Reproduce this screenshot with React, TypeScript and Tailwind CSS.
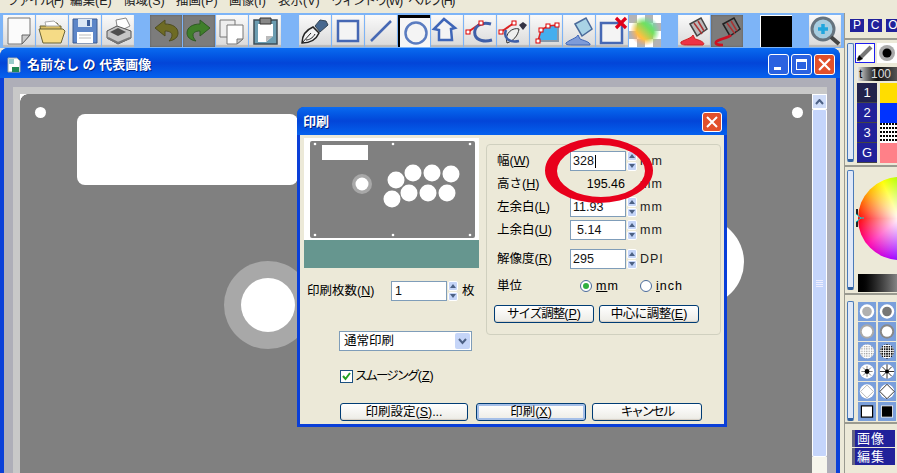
import React from "react";

const font = "font-['Liberation_Sans','Noto_Sans_CJK_JP',sans-serif]";

const Icons: Record<string, React.ReactNode> = {
  newDoc: (<><path d="M5 3h22v17l-8 9H5z" fill="#fbfbfb" stroke="#777" strokeWidth="1" /><path d="M27 20l-8 9v-9z" fill="#ccc" stroke="#666" /></>),
  folder: (<><path d="M4 11h6l2-3h9l2 3h2v16H7z" fill="#d9bd62" stroke="#6b6436" /><path d="M9 7l9-1 5 5H10z" fill="#fff" stroke="#aaa" /><path d="M3 14h24l2 2-4 12H7z" fill="#f5db86" stroke="#6b6436" /></>),
  save: (<><path d="M4 4h24v24H4z" fill="#5d86c8" stroke="#3d5c92" /><path d="M9 4h14v8H9z" fill="#dbe7f5" /><path d="M18 5h3v6h-3z" fill="#3c5f9c" /><path d="M8 17h16v11H8z" fill="#fff" /><path d="M10 20h12M10 23h12" stroke="#bbb" /></>),
  print: (<><path d="M14 5l10-2 4 8-12 6z" fill="#fff" stroke="#888" /><path d="M5 16l10-5 14 5v7l-13 6-11-6z" fill="#c5c5c5" stroke="#555" /><path d="M8 17l8-4 8 4-8 4z" fill="#4e4e4e" /><path d="M6 23l10 5 12-5" fill="none" stroke="#777" strokeWidth="2" /></>),
  undo: <path d="M15 5L5 13l10 8v-5c5 0 7 2 7 4 0 2-1 4-3 6 6-1 9-4 9-8 0-6-6-9-13-9z" fill="#6e6b24" stroke="#4f4d20" />,
  redo: <path d="M17 5l10 8-10 8v-5c-5 0-7 2-7 4 0 2 1 4 3 6-6-1-9-4-9-8 0-6 6-9 13-9z" fill="#3f7f2a" stroke="#2f5a24" />,
  copy: (<><path d="M4 5h15v17H4z" fill="#eee" stroke="#777" /><path d="M11 10h16v14l-6 5H11z" fill="#fff" stroke="#777" /><path d="M27 24l-6 5v-5z" fill="#ccc" stroke="#777" /></>),
  paste: (<><path d="M5 5h23v24H5z" fill="#6c9db1" stroke="#3c4c56" strokeWidth="1.5" /><path d="M9 9h15v12l-7 6H9z" fill="#fff" /><path d="M17 27l7-6h-7z" fill="#bbb" /><path d="M11 3h11v6H11z" fill="#888" stroke="#333" /></>),
  pen: (<><path d="M3 28c0-7 4-13 11-16l6 6c-3 7-10 10-17 10z" fill="#f2f2f2" stroke="#222" strokeWidth="1.5" /><path d="M3 28l9-10M7 25c3 0 7-2 9-6" stroke="#222" fill="none" /><path d="M16 11l5-6 6 1 2 4-8 7z" fill="#47688f" stroke="#345" /></>),
  rect: <rect x="6" y="6" width="20" height="20" fill="#f4f4f4" stroke="#4668b4" strokeWidth="2.5" />,
  line: <path d="M6 26L26 6" stroke="#4668b4" strokeWidth="2.5" />,
  ellipse: <circle cx="18" cy="18" r="10.5" fill="#f4f4f4" stroke="#5a7cc0" strokeWidth="2.5" />,
  poly: <path d="M13 4L3 14l5 1v10h13l-1-11 4-1z" fill="#f4f4f4" stroke="#3f66b8" strokeWidth="2.5" />,
  nodeCurve: (<><path d="M4 17L17 8" stroke="#d22" strokeWidth="2" /><path d="M27 9c-10-3-18 3-16 11 2 6 10 7 17 5" fill="none" stroke="#3f5fa8" strokeWidth="3" /><rect x="2" y="15" width="4" height="4" fill="#fff" stroke="#d00" /><rect x="15" y="6" width="4" height="4" fill="#fff" stroke="#d00" /></>),
  nodePen: (<><path d="M4 17L17 8" stroke="#d22" strokeWidth="2" /><path d="M10 28c-3-10 6-16 12-14-1 7-6 12-12 14z" fill="#eee" stroke="#333" /><path d="M9 15c-3 8 3 13 13 11" fill="none" stroke="#3f5fa8" strokeWidth="2.5" /><path d="M22 10l4-3 4 3-4 5z" fill="#334" /><rect x="2" y="15" width="4" height="4" fill="#fff" stroke="#d00" /><rect x="15" y="6" width="4" height="4" fill="#fff" stroke="#d00" /></>),
  polyFill: (<><path d="M8 26l3-11 7-4 9-1v16z" fill="#44aeee" /><path d="M8 26l3-11 7-4 9-1" fill="none" stroke="#d22" strokeWidth="1.5" /><path d="M8 26h20v-16" fill="none" stroke="#8899aa" strokeWidth="2" /><rect x="6" y="24" width="4" height="4" fill="#fff" stroke="#d00" /><rect x="9" y="13" width="4" height="4" fill="#fff" stroke="#d00" /><rect x="16" y="9" width="4" height="4" fill="#fff" stroke="#d00" /><rect x="25" y="8" width="4" height="4" fill="#fff" stroke="#d00" /></>),
  bucket: (<><path d="M12 9l11-6 6 11-10 7z" fill="#a9d3e5" stroke="#4a6a9a" strokeWidth="1.5" /><path d="M15 20c-1 3-9 5-12 8-1 2 3 2 7 2h17c1-3-8-5-10-6z" fill="#7e9bd8" stroke="#3f66b8" /></>),
  rectX: (<><rect x="5" y="8" width="21" height="20" fill="#f4f4f4" stroke="#4668b4" strokeWidth="2.5" /><path d="M20 3l10 10M30 3L20 13" stroke="#e0001a" strokeWidth="3.2" /></>),
  redBucket: (<><path d="M12 9l11-6 6 11-10 7z" fill="#bbb" stroke="#444" strokeWidth="1.5" /><path d="M16 8l8 11M20 6l6 10" stroke="#a33" strokeWidth="1.5" /><path d="M15 20c-1 3-9 5-12 7-1 3 3 3 7 3h15c3-2-3-5-8-6z" fill="#ee3344" stroke="#c22" /></>),
  redLine: (<><path d="M12 9l11-6 6 11-10 7z" fill="#777" stroke="#222" strokeWidth="1.5" /><path d="M16 8l8 11M20 6l6 10" stroke="#a33" strokeWidth="1.5" /><path d="M20 20c-2 3-13 4-15 7-1 2 1 3 7 3" fill="none" stroke="#cc1122" strokeWidth="2.5" /></>),
  zoom: (<><circle cx="14" cy="14" r="11" fill="#a7cde0" stroke="#66747f" strokeWidth="3" /><path d="M9 14h10M14 9v10" stroke="#22a6dd" strokeWidth="3.5" /><path d="M22 22l8 7" stroke="#444" strokeWidth="4" /></>),
};

function ToolButton({ icon, dim, active, ml }: { icon: string; dim?: boolean; active?: boolean; ml?: string }) {
  const look = dim
    ? "bg-[#7c7c7c] shadow-[inset_0_0_2px_#555]"
    : active
      ? "bg-[#f6f6f6] shadow-[inset_2px_3px_0_#000]"
      : "bg-gradient-to-b from-[#fafafa] to-[#d9d9d9] shadow-[inset_0_-2px_1px_#b8b8b8]";
  return (
    <div className={`w-[32px] h-[32px] shrink-0 ${ml ?? ""} ${look}`}>
      <svg viewBox="0 0 32 32" className="w-full h-full block">{Icons[icon]}</svg>
    </div>
  );
}

function CheckerIcon() {
  return (
    <div className="w-[32px] h-[32px] shrink-0 relative overflow-hidden">
      <svg viewBox="0 0 32 32" className="w-full h-full block">
        <defs>
          <pattern id="chk" width="16" height="16" patternUnits="userSpaceOnUse">
            <rect width="16" height="16" fill="#fff" />
            <rect width="8" height="8" fill="#b4b4b4" />
            <rect x="8" y="8" width="8" height="8" fill="#b4b4b4" />
          </pattern>
          <linearGradient id="rb" x1="0" y1="1" x2="1" y2="0">
            <stop offset="0%" stopColor="#ff70a0" />
            <stop offset="35%" stopColor="#ffc040" />
            <stop offset="60%" stopColor="#70e060" />
            <stop offset="100%" stopColor="#60c8ff" />
          </linearGradient>
          <radialGradient id="rm" cx="50%" cy="50%" r="50%">
            <stop offset="55%" stopColor="#fff" />
            <stop offset="100%" stopColor="#000" />
          </radialGradient>
          <mask id="mk"><circle cx="16" cy="16" r="15" fill="url(#rm)" /></mask>
        </defs>
        <rect width="32" height="32" fill="url(#chk)" />
        <rect width="32" height="32" fill="url(#rb)" mask="url(#mk)" />
      </svg>
    </div>
  );
}

const menus = [
  ["ファイル(F)", "w-[63px] tracking-[-1.5px]"],
  ["編集(E)", "w-[53px]"],
  ["領域(S)", "w-[53px]"],
  ["描画(P)", "w-[53px]"],
  ["画像(I)", "w-[49px]"],
  ["表示(V)", "w-[53px]"],
  ["ウィンドウ(W)", "w-[77px] tracking-[-1.5px]"],
  ["ヘルプ(H)", "w-[70px] tracking-[-1.5px]"],
];

function L({ t, k, tail, tk }: { t: string; k: string; tail?: string; tk?: string }) {
  return (
    <span className="whitespace-nowrap">
      <span className={tk}>{t}</span>(<span className="underline">{k}</span>){tail}
    </span>
  );
}

function Spin({ h = "h-[20px]" }: { h?: string }) {
  return (
    <div className={`w-[10px] ${h} ml-[1px] flex flex-col gap-[1px] shrink-0`}>
      {[0, 1].map((i) => (
        <div key={i} className="flex-1 bg-[#c5d5f8] border border-white rounded-[2px] flex items-center justify-center">
          <svg width="6" height="4" viewBox="0 0 6 4">
            <path d={i === 0 ? "M0 4L3 0l3 4z" : "M0 0l3 4 3-4z"} fill="#4d6185" />
          </svg>
        </div>
      ))}
    </div>
  );
}

function Input({ v, cursor, indent }: { v: string; cursor?: boolean; indent?: string }) {
  return (
    <div className={`w-[56px] h-[20px] border border-[#7f9db9] bg-white flex items-center text-[12.5px] text-[#111] ${indent ?? "pl-[2px]"}`}>
      {v}
      {cursor && <span className="w-[1px] h-[13px] bg-black ml-[1px]" />}
    </div>
  );
}

function Btn({ w, children, focus }: { w: string; children: React.ReactNode; focus?: boolean }) {
  return (
    <div className={`${w} h-[18px] shrink-0 border border-[#003c74] rounded-[3px] bg-gradient-to-b from-white to-[#ecebe5] flex items-center justify-center text-[12.5px] text-black ${focus ? "shadow-[inset_0_0_0_2px_#a5bfe8]" : "shadow-[inset_0_-1px_1px_#d6d0c5]"}`}>
      {children}
    </div>
  );
}

function Row({ label, children, mt }: { label: React.ReactNode; children: React.ReactNode; mt: string }) {
  return (
    <div className={`flex items-center h-[20px] ${mt}`}>
      <div className="w-[73px] shrink-0 text-[12.5px] text-black">{label}</div>
      {children}
    </div>
  );
}

function Unit({ t }: { t: string }) {
  return <span className="ml-[3px] text-[12.5px] tracking-[1px] text-[#222]">{t}</span>;
}

function CloseX({ size }: { size: number }) {
  return (
    <svg width={size} height={size} viewBox="0 0 12 12">
      <path d="M1 1l10 10M11 1L1 11" stroke="#fff" strokeWidth="2" />
    </svg>
  );
}

function Preview() {
  const circles = [[92, 42], [109, 35], [128, 35], [147, 36], [88, 61], [105, 55], [124, 55], [143, 55]];
  const dots = [[11, 6], [89, 6], [166, 6], [11, 97], [89, 97], [166, 97]];
  return (
    <svg width="175" height="130" viewBox="0 0 175 130" className="block">
      <rect width="175" height="102" fill="#fff" />
      <rect x="6" y="3" width="165" height="97" rx="2" fill="#808080" />
      <rect x="18" y="7" width="46" height="15" fill="#fff" />
      <circle cx="58" cy="46" r="10" fill="#a8a8a8" />
      <circle cx="58" cy="46" r="6.5" fill="#fff" />
      {circles.map(([x, y], i) => <circle key={i} cx={x} cy={y} r="8.5" fill="#fff" />)}
      {dots.map(([x, y], i) => <circle key={i} cx={x} cy={y} r="1.3" fill="#fff" />)}
      <rect y="102" width="175" height="28" fill="#66968f" />
    </svg>
  );
}

function Dialog() {
  return (
    <div className={`absolute left-[277px] top-[13px] w-[430px] h-[320px] rounded-t-[7px] bg-[#0a3fd8] flex flex-col ${font}`}>
      <div className="h-[28px] shrink-0 flex items-center justify-between pl-[6px] pr-[5px] pt-[2px] rounded-t-[7px] bg-gradient-to-b from-[#0b6af0] via-[#0345d8] to-[#0661ee]">
        <span className="text-[13px] font-bold text-white [text-shadow:1px_1px_0_#002080]">印刷</span>
        <div className="w-[20px] h-[20px] rounded-[3px] border border-white bg-[#e2502b] flex items-center justify-center">
          <CloseX size={12} />
        </div>
      </div>
      <div className="flex-1 mx-[3px] mb-[3px] bg-[#ece9d8] flex flex-col pt-[3px]">
        <div className="flex pl-[4px]">
          <div className="w-[175px] shrink-0 flex flex-col">
            <Preview />
            <div className="flex items-center h-[20px] mt-[13px] pl-[3px] text-[12.5px]">
              <div className="w-[84px] shrink-0"><L t="印刷枚数" k="N" /></div>
              <Input v="1" indent="pl-[3px]" />
              <Spin />
              <span className="ml-[4px]">枚</span>
            </div>
            <div className="w-[133px] h-[20px] mt-[30px] ml-[35px] border border-[#7f9db9] bg-white flex items-center justify-between text-[12.5px] pl-[4px]">
              通常印刷
              <div className="w-[15px] h-[16px] mr-[1px] bg-[#c5d5f8] rounded-[2px] flex items-center justify-center">
                <svg width="9" height="7" viewBox="0 0 9 7"><path d="M1 1l3.5 4L8 1" fill="none" stroke="#4d6185" strokeWidth="2" /></svg>
              </div>
            </div>
            <div className="flex items-center mt-[16px] ml-[36px] text-[12.5px]">
              <div className="w-[13px] h-[13px] border border-[#1c5180] bg-white flex items-center justify-center">
                <svg width="9" height="9" viewBox="0 0 9 9"><path d="M1 4l2.5 3L8 1" fill="none" stroke="#21a121" strokeWidth="2" /></svg>
              </div>
              <span className="ml-[2px]"><L t="スムージング" k="Z" tk="tracking-[-2px]" /></span>
            </div>
          </div>
          <div className="ml-[7px] mt-[6px] w-[235px] h-[191px] shrink-0 border border-[#d0d0bf] rounded-[4px] pl-[10px] pt-[6px]">
            <Row label={<L t="幅" k="W" />} mt="">
              <Input v="328" cursor />
              <Spin />
              <Unit t="mm" />
            </Row>
            <Row label={<L t="高さ" k="H" />} mt="mt-[3px]">
              <div className="w-[56px] text-right text-[12.5px] pr-[1px]">195.46</div>
              <span className="ml-[14px] text-[12.5px] tracking-[1px] text-[#222]">mm</span>
            </Row>
            <Row label={<L t="左余白" k="L" />} mt="mt-[3px]">
              <Input v="11.93" />
              <Spin />
              <Unit t="mm" />
            </Row>
            <Row label={<L t="上余白" k="U" />} mt="mt-[3px]">
              <Input v="5.14" indent="pl-[6px]" />
              <Spin />
              <Unit t="mm" />
            </Row>
            <Row label={<L t="解像度" k="R" />} mt="mt-[9px]">
              <Input v="295" />
              <Spin />
              <Unit t="DPI" />
            </Row>
            <Row label="単位" mt="mt-[7px]">
              <div className="ml-[10px] w-[12px] h-[12px] rounded-full border border-[#4a6a9a] bg-white flex items-center justify-center">
                <div className="w-[6px] h-[6px] rounded-full bg-[#30b040]" />
              </div>
              <span className="ml-[4px] w-[44px] text-[12.5px] tracking-[1px]"><span className="underline">m</span>m</span>
              <div className="w-[12px] h-[12px] rounded-full border border-[#4a6a9a] bg-white" />
              <span className="ml-[4px] text-[12.5px] tracking-[1px]"><span className="underline">i</span>nch</span>
            </Row>
            <div className="flex gap-[5px] mt-[9px] -ml-[3px]">
              <Btn w="w-[100px]"><L t="サイズ調整" k="P" tk="tracking-[-1px]" /></Btn>
              <Btn w="w-[100px]"><L t="中心に調整" k="E" tk="tracking-[-0.5px]" /></Btn>
            </div>
          </div>
        </div>
        <div className="mt-auto mb-[3px] ml-[40px] flex">
          <Btn w="w-[128px]"><L t="印刷設定" k="S" tail="..." /></Btn>
          <div className="ml-[8px]"><Btn w="w-[110px]" focus><L t="印刷" k="X" /></Btn></div>
          <div className="ml-[6px]"><Btn w="w-[110px]"><span className="tracking-[-2px]">キャンセル</span></Btn></div>
        </div>
      </div>
      <svg className="absolute left-[248px] top-[31px]" width="108" height="65" viewBox="0 0 108 65">
        <path
          fillRule="evenodd"
          fill="#e8001c"
          d="M0 32.5a54 32.5 0 1 0 108 0a54 32.5 0 1 0-108 0zM12 33a44 26 0 1 1 88 0a44 26 0 1 1-88 0z"
        />
      </svg>
    </div>
  );
}

function Strip({ h }: { h: string }) {
  return <div className={`w-[7px] ${h} shrink-0 ml-[2px] border border-[#4a7ab8] rounded-[2px] bg-[#dfe8f8] border-b-[3px] border-b-[#2f5f9f]`} />;
}

const shapes: React.ReactNode[] = [
  <><circle cx="10" cy="10" r="9" fill="#fff" /><circle cx="10" cy="10" r="6" fill="#b0b0b0" /></>,
  <><circle cx="10" cy="10" r="9" fill="#fff" /><circle cx="10" cy="10" r="6" fill="#777" /></>,
  <><circle cx="10" cy="10" r="9" fill="#aaa" /><circle cx="10" cy="10" r="6.5" fill="#fff" /></>,
  <><circle cx="10" cy="10" r="9" fill="#888" /><circle cx="10" cy="10" r="6.5" fill="#fff" /></>,
  <><circle cx="10" cy="10" r="9" fill="url(#dg)" /></>,
  <><circle cx="10" cy="10" r="9" fill="url(#dk)" /></>,
  <><circle cx="10" cy="10" r="9" fill="#fff" /><path d="M10 3v14M3 10h14M5 5l10 10M15 5L5 15" stroke="#666" /><circle cx="10" cy="10" r="3" fill="#000" /></>,
  <><circle cx="10" cy="10" r="9" fill="#fff" /><path d="M10 1v18M1 10h18M4 4l12 12M16 4L4 16" stroke="#000" /><circle cx="10" cy="10" r="2.5" fill="#000" /></>,
  <><circle cx="10" cy="10" r="9" fill="#fff" /><path d="M10 2l8 8-8 8-8-8z" fill="none" stroke="#aaa" /></>,
  <><circle cx="10" cy="10" r="9" fill="#fff" /><path d="M10 1l9 9-9 9-9-9z" fill="none" stroke="#000" /></>,
  <rect x="3" y="3" width="14" height="14" fill="#fff" stroke="#000" strokeWidth="1.5" />,
  <rect x="3" y="3" width="14" height="14" fill="#000" stroke="#fff" strokeWidth="1" />,
];

function RightPanel() {
  const rows: [string, string][] = [["1", "bg-[#22224c]"], ["2", "bg-[#21219a]"], ["3", "bg-[#21219a]"], ["G", "bg-[#21219a]"]];
  return (
    <div className={`w-[53px] shrink-0 bg-[#ece9d8] border-l border-[#9a9a90] overflow-hidden flex flex-col ${font}`}>
      <div className="h-[27px] shrink-0 pt-[6px] pl-[5px] flex gap-[4px] border-b-[2px] border-[#9a9a90]">
        {["P", "C", "O"].map((c) => (
          <div key={c} className="w-[14px] h-[13px] shrink-0 bg-[#21219a] text-white text-[12px] leading-[13px] text-center">{c}</div>
        ))}
      </div>
      <div className="h-[127px] shrink-0 pt-[3px] flex border-b-[2px] border-[#9a9a90]">
        <Strip h="h-[119px]" />
        <div className="ml-[3px] flex flex-col">
          <div className="flex gap-[2px] -ml-[2px]">
            <div className="w-[20px] h-[20px] border border-[#1d1df0] bg-white flex items-center justify-center shrink-0">
              <svg width="18" height="18" viewBox="0 0 18 18"><path d="M2 16L15 3" stroke="#777" strokeWidth="4" /><path d="M1 17l2-6 4 4z" fill="#000" /></svg>
            </div>
            <div className="w-[20px] h-[20px] bg-white flex items-center justify-center shrink-0">
              <svg width="18" height="18" viewBox="0 0 18 18"><circle cx="9" cy="9" r="8" fill="#aaa" /><circle cx="9" cy="9" r="4.5" fill="#000" /></svg>
            </div>
          </div>
          <div className="w-[40px] h-[14px] mt-[4px] flex items-center text-[12px] bg-gradient-to-r from-[#eee] via-[#111] to-[#555] text-white">
            <span className="w-[12px] text-black pl-[2px]">t</span>
            <span className="ml-[2px] text-[#ddd]">100</span>
          </div>
          <div className="mt-[2px] w-[40px] flex flex-col">
            {rows.map(([n, bg], i) => (
              <div key={n} className="h-[20px] flex">
                <div className={`w-[20px] ${bg} text-white text-[13px] leading-[20px] text-center border-b border-[#444]`}>{n}</div>
                <div className="w-[3px] bg-[#ece9d8]" />
                <div className="flex-1">
                  {i === 0 && <div className="h-full bg-[#ffdd00]" />}
                  {i === 1 && <div className="h-full bg-[#0033ff]" />}
                  {i === 2 && (
                    <svg width="17" height="20" className="block">
                      <defs>
                        <pattern id="pd" width="3" height="4" patternUnits="userSpaceOnUse"><rect width="3" height="4" fill="#fff" /><rect width="2" height="2" fill="#000" /></pattern>
                      </defs>
                      <rect width="17" height="20" fill="url(#pd)" />
                    </svg>
                  )}
                  {i === 3 && <div className="h-full bg-[#ff8088]" />}
                </div>
              </div>
            ))}
          </div>
        </div>
      </div>
      <div className="h-[128px] shrink-0 pt-[3px] flex border-b-[2px] border-[#9a9a90]">
        <Strip h="h-[120px]" />
        <div className="ml-[4px] flex flex-col relative">
          <div className="w-[83px] h-[83px] mt-[7px] rounded-full bg-[conic-gradient(#a8ff00,#00ff66_60deg,#00ffff_90deg,#0066ff_150deg,#aa00ff_190deg,#ff00aa_230deg,#ff0000_270deg,#ffaa00_310deg,#ffff00_335deg,#a8ff00)] overflow-hidden shrink-0">
            <div className="w-full h-full rounded-full bg-[radial-gradient(circle,#ffffff,#ffffff00_72%)]" />
          </div>
          <svg className="absolute left-[-2px] top-[39px]" width="8" height="18" viewBox="0 0 8 18">
            <path d="M1 0v6M1 12v6" stroke="#222" strokeWidth="2" />
            <path d="M0 5l5 4-5 4M5 9h3" fill="none" stroke="#00d8d8" />
          </svg>
          <div className="w-[40px] h-[18px] mt-[14px] bg-gradient-to-r from-[#000] to-[#888]" />
        </div>
      </div>
      <div className="h-[129px] shrink-0 pt-[6px] flex border-b-[2px] border-[#9a9a90]">
        <Strip h="h-[120px]" />
        <svg width="40" height="120" viewBox="0 0 40 120" className="ml-[4px] mt-[1px] block shrink-0">
          <defs>
            <pattern id="dg" width="3" height="3" patternUnits="userSpaceOnUse"><rect width="3" height="3" fill="#fff" /><rect width="1.5" height="1.5" fill="#999" /></pattern>
            <pattern id="dk" width="3" height="3" patternUnits="userSpaceOnUse"><rect width="3" height="3" fill="#fff" /><rect width="2" height="2" fill="#111" /></pattern>
          </defs>
          {shapes.map((s, i) => (
            <g key={i} transform={`translate(${(i % 2) * 20} ${Math.floor(i / 2) * 20})`}>
              <rect x="0" y="0" width="18" height="19" fill="#7a9fdb" />
              <g transform="translate(9 9.5) scale(0.8) translate(-10 -10)">{s}</g>
            </g>
          ))}
        </svg>
      </div>
      <div className="flex-1 pt-[6px] pl-[7px] flex flex-col gap-[1px]">
        {["画像", "編集"].map((t) => (
          <div key={t} className="w-[43px] h-[17px] bg-[#21219a] border-l-[3px] border-[#666680] text-white text-[13px] leading-[17px] pl-[2px] tracking-[1px]">{t}</div>
        ))}
      </div>
    </div>
  );
}

function Scrollbar() {
  return (
    <div className="w-[15px] shrink-0 flex flex-col">
      <div className="h-[15px] bg-[#cfdcf8] border border-white flex items-center justify-center">
        <svg width="9" height="6" viewBox="0 0 9 6"><path d="M1 5l3.5-4L8 5" fill="none" stroke="#4d6185" strokeWidth="2" /></svg>
      </div>
      <div className="h-[348px] bg-[#c5d5fb] border border-white rounded-[2px] flex items-center justify-center">
        <svg width="7" height="8" viewBox="0 0 7 8" className="mt-[2px]"><path d="M0 .5h7M0 2.5h7M0 4.5h7M0 6.5h7" stroke="#eef" /></svg>
      </div>
      <div className="flex-1 bg-[#f6f5ec]" />
    </div>
  );
}

function MainWindow() {
  return (
    <div className="w-[840px] h-[425px] shrink-0 rounded-t-[8px] bg-[#0a3fd8] flex flex-col overflow-hidden">
      <div className={`h-[30px] shrink-0 flex items-center pl-[7px] pr-[5px] pt-[3px] bg-gradient-to-b from-[#0b6af0] via-[#0345d8] to-[#0661ee] ${font}`}>
        <svg width="14" height="16" viewBox="0 0 14 16" className="shrink-0">
          <path d="M1 1h9l3 3v11H1z" fill="#fff" stroke="#9aa" />
          <path d="M2 2h5v5H2z" fill="#9cc" />
          <path d="M5 10h7v5H5z" fill="#285" />
        </svg>
        <span className="ml-[6px] text-[13px] font-bold text-white [text-shadow:1px_1px_0_#002080] whitespace-pre">名前なし の 代表画像</span>
        <div className="ml-auto flex gap-[2px]">
          <div className="w-[21px] h-[21px] rounded-[3px] border border-white bg-[#2b62e0] relative flex items-end pl-[5px] pb-[4px]">
            <div className="w-[7px] h-[3px] bg-white" />
          </div>
          <div className="w-[21px] h-[21px] rounded-[3px] border border-white bg-[#2b62e0] flex items-center justify-center">
            <div className="w-[11px] h-[11px] border border-white border-t-[3px]" />
          </div>
          <div className="w-[21px] h-[21px] rounded-[3px] border border-white bg-[#e2502b] flex items-center justify-center">
            <CloseX size={13} />
          </div>
        </div>
      </div>
      <div className="flex-1 mx-[4px] bg-[#aeaeb8] pt-[9px] pl-[9px] pr-[9px] flex min-h-0">
        <div className="flex-1 bg-[#c8c8c8] pt-[7px] pl-[7px] flex min-w-0">
          <div className="flex-1 bg-[#808080] relative">
            <div className="absolute left-0 top-0 w-[8px] h-[8px] bg-[radial-gradient(circle_at_100%_100%,#808080_7.5px,#ffffff_8px)]" />
            <div className="absolute left-[15px] top-[13px] w-[11px] h-[11px] rounded-full bg-white" />
            <div className="absolute left-[772px] top-[13px] w-[11px] h-[11px] rounded-full bg-white" />
            <div className="absolute left-[57px] top-[20px] w-[221px] h-[71px] rounded-[8px] bg-white" />
            <div className="absolute left-[204px] top-[167px] w-[88px] h-[88px] rounded-full bg-[#a8a8a8] flex items-center justify-center">
              <div className="w-[54px] h-[54px] rounded-full bg-white" />
            </div>
            <div className="absolute left-[636px] top-[124px] w-[88px] h-[88px] rounded-full bg-white" />
            <Dialog />
          </div>
          <Scrollbar />
        </div>
      </div>
    </div>
  );
}

export default function App() {
  return (
    <div className={`w-[897px] h-[473px] overflow-hidden bg-[#ece9d8] flex flex-col ${font}`}>
      <div className="h-[13px] shrink-0 overflow-hidden flex pl-[7px] bg-[#ece9d8] text-[12.5px] text-[#222]">
        {menus.map(([t, w]) => (
          <div key={t} className={`${w} shrink-0 -mt-[8px] leading-[18px] whitespace-nowrap`}>{t}</div>
        ))}
      </div>
      <div className="flex flex-1 min-h-0">
        <div className="w-[844px] shrink-0 flex flex-col">
          <div className="h-[35px] shrink-0 bg-[#7db4f7] pt-[2px] pl-[3px] flex gap-[1px]">
            <ToolButton icon="newDoc" />
            <ToolButton icon="folder" />
            <ToolButton icon="save" />
            <ToolButton icon="print" />
            <ToolButton icon="undo" dim ml="ml-[15px]" />
            <ToolButton icon="redo" dim />
            <ToolButton icon="copy" />
            <ToolButton icon="paste" />
            <ToolButton icon="pen" ml="ml-[17px]" />
            <ToolButton icon="rect" />
            <ToolButton icon="line" />
            <ToolButton icon="ellipse" active />
            <ToolButton icon="poly" />
            <ToolButton icon="nodeCurve" />
            <ToolButton icon="nodePen" />
            <ToolButton icon="polyFill" />
            <ToolButton icon="bucket" />
            <ToolButton icon="rectX" />
            <CheckerIcon />
            <ToolButton icon="redBucket" ml="ml-[16px]" />
            <ToolButton icon="redLine" dim />
            <div className="w-[32px] h-[32px] ml-[16px] shrink-0 bg-black border-t border-l border-white" />
            <ToolButton icon="zoom" ml="ml-[16px]" />
          </div>
          <MainWindow />
        </div>
        <RightPanel />
      </div>
    </div>
  );
}
